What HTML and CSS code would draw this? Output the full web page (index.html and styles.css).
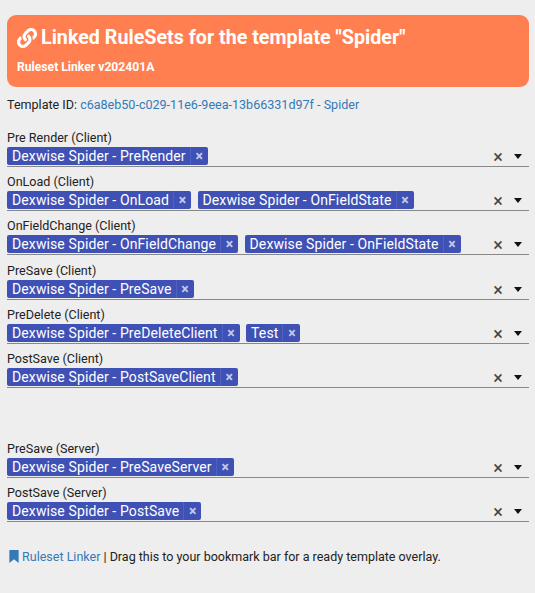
FILE: index.html
```html
<!DOCTYPE html>
<html lang="en">
<head>
<meta charset="utf-8">
<title>Ruleset Linker</title>
<link rel="stylesheet" href="styles.css">
</head>
<body>
<header class="banner">
  <h1 class="banner-title">
    <svg class="banner-icon" viewBox="0 0 512 512" width="20" height="20" aria-hidden="true"><path fill="#fff" d="M326.612 185.391c59.747 59.809 58.927 155.698.36 214.59-.11.12-.24.25-.36.37l-67.2 67.2c-59.27 59.27-155.699 59.262-214.96 0-59.27-59.26-59.27-155.7 0-214.96l37.106-37.106c9.84-9.84 26.786-3.3 27.294 10.606.648 17.722 3.826 35.527 9.69 52.721 1.986 5.822.567 12.262-3.783 16.612l-13.087 13.087c-28.026 28.026-28.905 73.66-1.155 101.96 28.024 28.579 74.086 28.749 102.325.51l67.2-67.19c28.191-28.191 28.073-73.757 0-101.83-3.701-3.694-7.429-6.564-10.341-8.569a16.037 16.037 0 0 1-6.947-12.606c-.396-10.567 3.348-21.456 11.698-29.806l21.054-21.055c5.521-5.521 14.182-6.199 20.584-1.731a152.482 152.482 0 0 1 20.522 17.197zM467.547 44.449c-59.261-59.262-155.69-59.27-214.96 0l-67.2 67.2c-.12.12-.25.25-.36.37-58.566 58.892-59.387 154.781.36 214.59a152.454 152.454 0 0 0 20.521 17.196c6.402 4.468 15.064 3.789 20.584-1.731l21.054-21.055c8.35-8.35 12.094-19.239 11.698-29.806a16.037 16.037 0 0 0-6.947-12.606c-2.912-2.005-6.64-4.875-10.341-8.569-28.073-28.073-28.191-73.639 0-101.83l67.2-67.19c28.239-28.239 74.3-28.069 102.325.51 27.75 28.3 26.872 73.934-1.155 101.96l-13.087 13.087c-4.35 4.35-5.769 10.79-3.783 16.612 5.864 17.194 9.042 34.999 9.69 52.721.509 13.906 17.454 20.446 27.294 10.606l37.106-37.106c59.271-59.259 59.271-155.699.001-214.959z"/></svg>
    <span>Linked RuleSets for the template "Spider"</span>
  </h1>
  <div class="banner-sub">Ruleset Linker v202401A</div>
</header>
<p class="template-id">Template ID: <a href="#">c6a8eb50-c029-11e6-9eea-13b66331d97f - Spider</a></p>

<div class="field">
  <div class="field-label">Pre Render (Client)</div>
  <div class="select"><div class="tags"><span class="tag"><span class="tag-text">Dexwise Spider - PreRender</span><span class="tag-x">×</span></span></div><span class="clear">×</span><span class="caret"></span></div>
</div>
<div class="field">
  <div class="field-label">OnLoad (Client)</div>
  <div class="select"><div class="tags"><span class="tag"><span class="tag-text">Dexwise Spider - OnLoad</span><span class="tag-x">×</span></span><span class="tag"><span class="tag-text">Dexwise Spider - OnFieldState</span><span class="tag-x">×</span></span></div><span class="clear">×</span><span class="caret"></span></div>
</div>
<div class="field">
  <div class="field-label">OnFieldChange (Client)</div>
  <div class="select"><div class="tags"><span class="tag"><span class="tag-text">Dexwise Spider - OnFieldChange</span><span class="tag-x">×</span></span><span class="tag"><span class="tag-text">Dexwise Spider - OnFieldState</span><span class="tag-x">×</span></span></div><span class="clear">×</span><span class="caret"></span></div>
</div>
<div class="field">
  <div class="field-label">PreSave (Client)</div>
  <div class="select"><div class="tags"><span class="tag"><span class="tag-text">Dexwise Spider - PreSave</span><span class="tag-x">×</span></span></div><span class="clear">×</span><span class="caret"></span></div>
</div>
<div class="field">
  <div class="field-label">PreDelete (Client)</div>
  <div class="select"><div class="tags"><span class="tag"><span class="tag-text">Dexwise Spider - PreDeleteClient</span><span class="tag-x">×</span></span><span class="tag"><span class="tag-text">Test</span><span class="tag-x">×</span></span></div><span class="clear">×</span><span class="caret"></span></div>
</div>
<div class="field">
  <div class="field-label">PostSave (Client)</div>
  <div class="select"><div class="tags"><span class="tag"><span class="tag-text">Dexwise Spider - PostSaveClient</span><span class="tag-x">×</span></span></div><span class="clear">×</span><span class="caret"></span></div>
</div>
<div class="spacer"></div>
<div class="field">
  <div class="field-label">PreSave (Server)</div>
  <div class="select"><div class="tags"><span class="tag"><span class="tag-text">Dexwise Spider - PreSaveServer</span><span class="tag-x">×</span></span></div><span class="clear">×</span><span class="caret"></span></div>
</div>
<div class="field">
  <div class="field-label">PostSave (Server)</div>
  <div class="select"><div class="tags"><span class="tag"><span class="tag-text">Dexwise Spider - PostSave</span><span class="tag-x">×</span></span></div><span class="clear">×</span><span class="caret"></span></div>
</div>

<p class="footer"><a href="#"><svg class="bookmark" viewBox="0 0 10 14" width="10" height="13" aria-hidden="true"><path d="M0 0H10V14L5 10 0 14Z" fill="#337ab7"/></svg> Ruleset Linker</a> | Drag this to your bookmark bar for a ready template overlay.</p>
</body>
</html>
```
FILE: styles.css
```css
* { box-sizing: border-box; }
html, body { margin: 0; }
body {
  width: 535px;
  height: 593px;
  overflow: hidden;
  padding: 15px 6px 0 7px;
  background: #eeeeee;
  font-family: Roboto, "Liberation Sans", sans-serif;
  font-size: 12.55px;
  line-height: 16px;
  color: #222;
}
a { color: #337ab7; text-decoration: none; }
.banner {
  height: 72px;
  padding: 11px 10px 0;
  background: #ff7f50;
  border-radius: 9px;
  color: #fff;
}
.banner-title {
  display: flex;
  align-items: center;
  gap: 4px;
  margin: 0;
  font-size: 19.7px;
  line-height: 24px;
  font-weight: 700;
}
.banner-sub {
  margin-top: 10px;
  font-size: 12.15px;
  line-height: 14px;
  font-weight: 700;
}
.template-id { margin: 10px 0 0; height: 16px; }
.field { height: 44.2px; }
.template-id + .field { margin-top: 17px; }
.field-label { height: 16px; line-height: 15px; }
.select {
  display: flex;
  align-items: flex-start;
  height: 21px;
  padding: 1px 0 1px;
  border-bottom: 1px solid #888;
}
.tags { display: flex; flex: 1; gap: 6.5px; min-width: 0; }
.tag {
  display: flex;
  height: 18px;
  background: #3f51b5;
  border-radius: 2px;
  color: #fff;
  font-size: 14px;
  line-height: 18px;
}
.tag-text { padding: 0 4px 0 5px; letter-spacing: 0.11px; }
.tag-x {
  width: 18px;
  border-left: 1px solid #5062c0;
  text-align: center;
  font-weight: 700;
  font-size: 14px;
  color: #c5cbe9;
}
.clear {
  width: 10px;
  margin-right: 11px;
  margin-top: 2px;
  text-align: center;
  font-size: 18px;
  line-height: 16px;
  color: #444;
}
.caret {
  width: 0;
  height: 0;
  margin-right: 7px;
  margin-top: 7px;
  border-left: 4.5px solid transparent;
  border-right: 4.5px solid transparent;
  border-top: 5px solid #111;
}
.spacer { height: 45.5px; }
.footer { margin: 20px 0 0 2px; font-size: 12.5px; }
.bookmark { vertical-align: -2px; }
```
